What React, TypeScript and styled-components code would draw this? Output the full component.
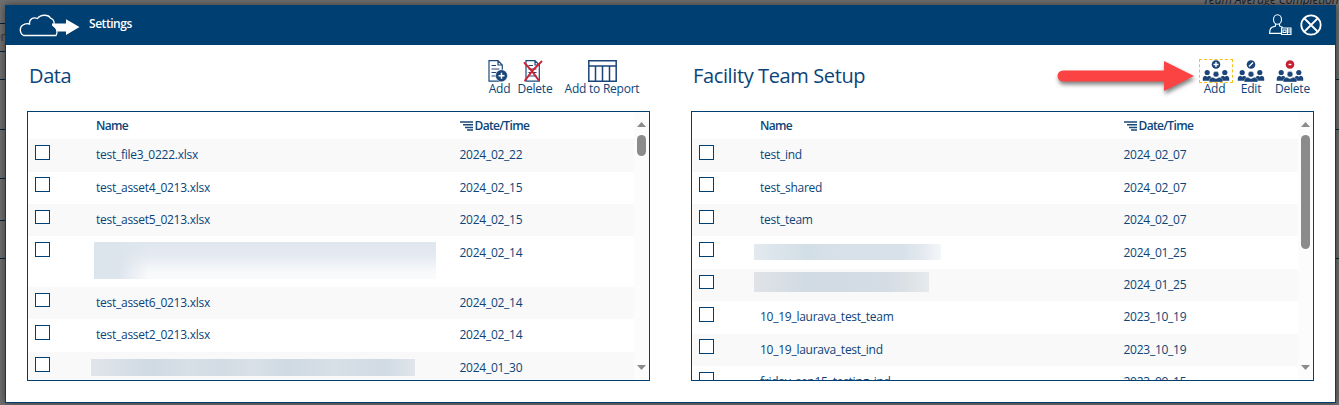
import React from 'react';
import styled, { createGlobalStyle } from 'styled-components';

const navy = '#003f72';
const ink = '#0b4478';

const Global = createGlobalStyle`
  * { box-sizing: border-box; }
  body { margin: 0; background: #707070; overflow: hidden; font-family: "Open Sans", "Noto Sans", sans-serif; color: ${ink}; }
`;

const Page = styled.div`
  position: relative;
  width: 1339px;
  height: 405px;
  padding: 5px 3px 2px 5px;
  overflow: hidden;
`;

const Rule = styled.div<{ $y: number; $side: 'left' | 'right' }>`
  position: absolute;
  top: ${p => p.$y}px;
  ${p => p.$side}: 0;
  width: 5px;
  height: 1px;
  background: #06203a;
`;

const Behind = styled.span<{ $x: number; $y: number; $color: string }>`
  position: absolute;
  left: ${p => p.$x}px;
  top: ${p => p.$y}px;
  font-size: 12px;
  line-height: 14px;
  letter-spacing: -0.12px;
  white-space: nowrap;
  color: ${p => p.$color};
`;

const Modal = styled.section`
  position: relative;
  height: 398px;
  background: #fff;
  border: 1px solid ${navy};
  box-shadow: 0 0 8px rgba(0, 0, 0, 0.5);
`;

const Header = styled.header`
  display: flex;
  align-items: center;
  height: 39px;
  padding: 0 13px;
  background: ${navy};
  color: #fff;
`;

const HeaderActions = styled.div`
  display: flex;
  align-items: center;
  gap: 8px;
  margin-top: -1px;
`;

const Title = styled.h1`
  margin: 0 auto 3px 9px;
  font-size: 12px;
  line-height: 16px;
  font-weight: 600;
  letter-spacing: -0.45px;
`;

const Columns = styled.main`
  display: grid;
  grid-template-columns: 623px 623px;
  column-gap: 41px;
  padding-left: 21px;
`;

const PanelHead = styled.div`
  display: flex;
  justify-content: space-between;
  height: 66px;
`;

const Heading = styled.h2`
  margin: 17px 0 0 2px;
  font-size: 20px;
  line-height: 28px;
  font-weight: 400;
  letter-spacing: -0.38px;
`;

const Tools = styled.div<{ $right: number }>`
  display: flex;
  align-items: flex-start;
  padding: 14px ${p => p.$right}px 0 0;
`;

const Tool = styled.button<{ $width: number; $shift?: number }>`
  display: flex;
  flex-direction: column;
  align-items: center;
  width: ${p => p.$width}px;
  padding: 0;
  border: 0;
  background: none;
  color: ${ink};
  font: inherit;
  font-size: 12px;
  line-height: 14px;
  letter-spacing: -0.24px;
  white-space: nowrap;
`;

const Label = styled.span<{ $nudge?: number }>`
  margin-left: ${p => p.$nudge ?? 0}px;
`;

const IconSlot = styled.span<{ $focused?: boolean }>`
  display: flex;
  justify-content: center;
  width: 34px;
  height: 24px;
  margin-bottom: -1px;
  border: 1px dashed ${p => (p.$focused ? '#f4c020' : 'transparent')};
`;

const Table = styled.div`
  display: flex;
  height: 270px;
  border: 1px solid ${navy};
  overflow: hidden;
`;

const Rows = styled.div`
  width: 606px;
  font-size: 12px;
  letter-spacing: -0.26px;
`;

const Row = styled.div<{ $height: number; $shade: boolean }>`
  display: grid;
  grid-template-columns: 68px 363.500px 1fr;
  height: ${p => p.$height}px;
  background: ${p => (p.$shade ? '#f9f9f9' : '#fff')};
`;

const HeadRow = styled(Row)`
  font-weight: 600;
  letter-spacing: -0.65px;
`;

const Check = styled.span`
  width: 15px;
  height: 14.6px;
  margin: 5.7px 0 0 7px;
  border: 1px solid ${navy};
  background: #fff;
`;

const Cell = styled.span<{ $top: number }>`
  display: flex;
  align-items: center;
  gap: 1px;
  height: 16px;
  margin-top: ${p => p.$top}px;
  white-space: nowrap;
`;

const Redacted = styled.span<{ $w: number; $h: number; $x: number; $y: number; $fill: string }>`
  width: ${p => p.$w}px;
  height: ${p => p.$h}px;
  margin: ${p => p.$y}px 0 0 ${p => p.$x}px;
  background: ${p => p.$fill};
`;

const Scrollbar = styled.div`
  display: flex;
  flex-direction: column;
  align-items: center;
  width: 15px;
  padding: 10px 0;
  background: #fcfcfc;
`;

const Thumb = styled.span<{ $height: number }>`
  width: 9px;
  height: ${p => p.$height}px;
  margin: 8px 0 auto;
  border-radius: 5px;
  background: #8b8b8b;
`;

const Pointer = styled.svg`
  position: absolute;
  left: 1046px;
  top: 52px;
  filter: drop-shadow(1px 3px 2px rgba(0, 0, 0, 0.5));
`;

const CloudLogo = () => (
  <svg width="61" height="24" viewBox="0 0 61 24" fill="none">
    <path d="M4.500 21.500C.5 19.500 .3 13.500 3.500 11.300C5.500 9.700 8 9.300 10.500 10C10 5.500 14 2.500 18.500 4.500C21.500 .2 29.500 .2 31.500 4.200C35 5 36 9 34.500 12C38 14 39 18 37 21.500Z" stroke="#fff" strokeWidth="1.300" />
    <path d="M33 9.500H47V5.300L60.500 13L47 21V17.500H38Q37 13 33 11.500Z" fill="#fff" />
  </svg>
);

const UserIcon = () => (
  <svg width="23" height="22" viewBox="0 0 23 22" fill="none" stroke="#fff" strokeWidth="1.100">
    <ellipse cx="8.500" cy="5.500" rx="4" ry="4.800" />
    <path d="M6.500 10V12L2.500 13.500Q.6 15 .6 19.400H12M10.500 10V12L14 13.500" />
    <path d="M12.500 14H22V20.500H12.500Z" fill={navy} />
    <path d="M14 16H17V18.500H14ZM18.500 14V20M19 16H22M19 18H22" />
  </svg>
);

const CloseIcon = () => (
  <svg width="22" height="22" viewBox="0 0 22 22" fill="none" stroke="#fff" strokeWidth="1.800">
    <circle cx="11" cy="11" r="9.700" />
    <path d="M4.500 4.500L17.500 17.500M17.500 4.500L4.500 17.500" />
  </svg>
);

const Sheet = () => (
  <path d="M1 .7H10L14.300 5V21.200H1ZM10 .7V5H14.300M3.500 5.500H8M3.500 9H11.500M3.500 12.500H11.500M3.500 16H11.500" fill="none" stroke="#1b4a7a" strokeWidth="1.200" />
);

const SheetAdd = () => (
  <svg width="22" height="22" viewBox="0 0 22 22">
    <Sheet />
    <circle cx="13.500" cy="15.700" r="6" fill="#1b4478" stroke="#fff" strokeWidth=".6" />
    <path d="M10.500 15.700H16.500M13.500 12.700V18.700" stroke="#fff" strokeWidth="1.500" />
  </svg>
);

const SheetDelete = () => (
  <svg width="24" height="22" viewBox="0 0 24 22">
    <g transform="translate(2)"><Sheet /></g>
    <path d="M1.500 3Q9 10 15.500 20M18.500 1.500Q9 10 2 20.500" fill="none" stroke="#cf1f32" strokeWidth="1.900" strokeLinecap="round" />
  </svg>
);

const ReportIcon = () => (
  <svg width="29" height="22" viewBox="0 0 29 22" fill="none" stroke="#1b4478" strokeWidth="1.500">
    <path d="M.8 .8H28.200V21.200H.8ZM.8 6H28.200M7.500 6V21M14.500 6V21M21.500 6V21" />
  </svg>
);

const TeamIcon = ({ kind }: { kind: 'add' | 'edit' | 'delete' }) => (
  <svg width="28" height="22" viewBox="0 0 28 22" fill="#1b4478">
    <circle cx="14" cy="4.500" r="4.300" fill={kind === 'delete' ? '#c4202f' : '#1b4478'} />
    <path d={kind === 'add' ? 'M11.500 4.500H16.500M14 2V7' : kind === 'edit' ? 'M12 6.500L16 2.500' : 'M12.600 4.500H15.400'} stroke="#fff" strokeWidth="1.400" />
    <circle cx="5.200" cy="12.500" r="2.600" />
    <circle cx="22.800" cy="12.500" r="2.600" />
    <path d="M.8 20.700V18Q1 16 3.500 15.700L5.200 16.800L7 15.700Q8.500 15.700 9.300 17.200L10 20.700ZM27.200 20.700V18Q27 16 24.500 15.700L22.800 16.800L21 15.700Q19.500 15.700 18.700 17.200L18 20.700Z" />
    <circle cx="14" cy="14.200" r="2.900" stroke="#fff" strokeWidth=".5" />
    <path d="M7.300 21.900V20Q7.300 17.900 10.800 17.300L14 18.800L17.200 17.300Q20.700 17.900 20.700 20V21.900Z" stroke="#fff" strokeWidth=".3" />
  </svg>
);

const SortIcon = () => (
  <svg width="14" height="10" viewBox="0 0 14 10" stroke="#1b4a7a" strokeWidth="1.500">
    <path d="M0 1H13M3 3.700H13M5 6.400H13M7 9H13" />
  </svg>
);

const Caret = ({ down }: { down?: boolean }) => (
  <svg width="9" height="5" viewBox="0 0 9 5"><path d={down ? 'M0 0H9L4.500 5Z' : 'M0 5H9L4.500 0Z'} fill="#8b8b8b" /></svg>
);

type Blur = { w: number; h: number; x: number; y: number; fill: string };
type Item = { name: string | Blur; date: string; height?: number };

const files: Item[] = [
  { name: 'test_file3_0222.xlsx', date: '2024_02_22' },
  { name: 'test_asset4_0213.xlsx', date: '2024_02_15' },
  { name: 'test_asset5_0213.xlsx', date: '2024_02_15' },
  { name: { w: 342, h: 37, x: -2, y: 5.5, fill: 'linear-gradient(90deg, #dce4ec 7%, #dce4ec00 16%), linear-gradient(180deg, #dfe6ee 0%, #e4eaf1 35%, #f9fafb 85%)' }, date: '2024_02_14', height: 50.4 },
  { name: 'test_asset6_0213.xlsx', date: '2024_02_14' },
  { name: 'test_asset2_0213.xlsx', date: '2024_02_14' },
  { name: { w: 324, h: 17, x: -5, y: 7.3, fill: 'linear-gradient(90deg, #e1e5eb, #cfdae3 18%, #d7dfe7 30%, #d2dce4 40%, #d9e0e7 50%, #cfdae3 61%, #d7dfe7 75%, #d1dbe4 91%, #e1e5eb)' }, date: '2024_01_30' },
];

const teams: Item[] = [
  { name: 'test_ind', date: '2024_02_07' },
  { name: 'test_shared', date: '2024_02_07' },
  { name: 'test_team', date: '2024_02_07' },
  { name: { w: 187, h: 16, x: -6, y: 7.5, fill: 'linear-gradient(90deg, #e3e9ef, #d2dee6 28%, #d8e1e9 50%, #d8e1ea 80%, #e4e9f0 90%, #f4f7f9)' }, date: '2024_01_25' },
  { name: { w: 175, h: 20, x: -6, y: 3, fill: 'linear-gradient(90deg, #e0e3e8, #d1dbe3 30%, #d4dce5 75%, #dce2e6 88%, #e7eaec)' }, date: '2024_01_25' },
  { name: '10_19_laurava_test_team', date: '2023_10_19' },
  { name: '10_19_laurava_test_ind', date: '2023_10_19' },
  { name: 'friday_sep15_testing_ind', date: '2023_09_15' },
];

const DataTable = ({ items, thumb }: { items: Item[]; thumb: number }) => (
  <Table>
    <Rows>
      <HeadRow $height={27.3} $shade={false}>
        <span />
        <Cell $top={5.7}>Name</Cell>
        <Cell $top={5.7}><SortIcon />Date/Time</Cell>
      </HeadRow>
      {items.map((item, i) => (
        <Row key={i} $height={item.height ?? 32.4} $shade={i % 2 === 0}>
          <Check />
          {typeof item.name === 'string'
            ? <Cell $top={7.7}>{item.name}</Cell>
            : <Redacted $w={item.name.w} $h={item.name.h} $x={item.name.x} $y={item.name.y} $fill={item.name.fill} />}
          <Cell $top={7.7}>{item.date}</Cell>
        </Row>
      ))}
    </Rows>
    <Scrollbar>
      <Caret />
      <Thumb $height={thumb} />
      <Caret down />
    </Scrollbar>
  </Table>
);

export default function App() {
  return (
    <Page>
      <Global />
      {[23, 51, 79, 129, 178, 220, 258].map(y => <Rule key={y} $y={y} $side="left" />)}
      {[79, 129, 258].map(y => <Rule key={y} $y={y} $side="right" />)}
      <Behind $x={-6} $y={30} $color="#4a3428">er</Behind>
      <Behind $x={1203} $y={-7} $color="#16222e"><i>Team Average Completion</i></Behind>
      <Modal>
        <Header>
          <CloudLogo />
          <Title>Settings</Title>
          <HeaderActions>
            <UserIcon />
            <CloseIcon />
          </HeaderActions>
        </Header>
        <Columns>
          <section>
            <PanelHead>
              <Heading>Data</Heading>
              <Tools $right={0}>
                <Tool $width={34}><IconSlot><SheetAdd /></IconSlot><Label $nudge={1}>Add</Label></Tool>
                <Tool $width={38}><IconSlot><SheetDelete /></IconSlot><Label>Delete</Label></Tool>
                <Tool $width={96}><IconSlot><ReportIcon /></IconSlot><Label>Add to Report</Label></Tool>
              </Tools>
            </PanelHead>
            <DataTable items={files} thumb={21} />
          </section>
          <section>
            <PanelHead>
              <Heading>Facility Team Setup</Heading>
              <Tools $right={3}>
                <Tool $width={34}><IconSlot $focused><TeamIcon kind="add" /></IconSlot><Label $nudge={-3}>Add</Label></Tool>
                <Tool $width={36}><IconSlot><TeamIcon kind="edit" /></IconSlot><Label>Edit</Label></Tool>
                <Tool $width={42}><IconSlot><TeamIcon kind="delete" /></IconSlot><Label $nudge={5}>Delete</Label></Tool>
              </Tools>
            </PanelHead>
            <DataTable items={teams} thumb={114} />
          </section>
        </Columns>
      </Modal>
      <Pointer width="154" height="50" viewBox="0 0 154 50">
        <path d="M17 18.500H118V9L148 24L118 39V29.500H17A5.500 5.500 0 0 1 17 18.500Z" fill="#fc4343" />
      </Pointer>
    </Page>
  );
}
